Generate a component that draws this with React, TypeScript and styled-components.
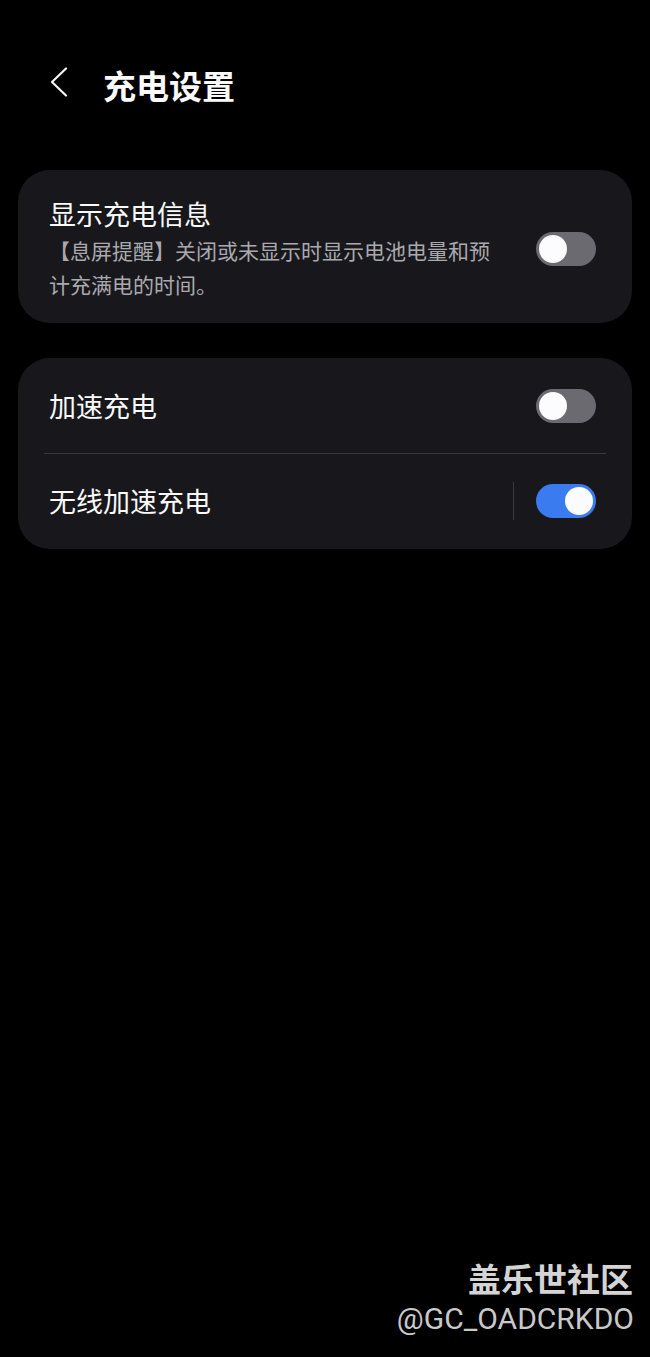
import styled, { createGlobalStyle } from "styled-components";

const GlobalStyle = createGlobalStyle`
  html, body {
    margin: 0;
    padding: 0;
    background: #000;
  }
  * {
    box-sizing: border-box;
  }
`;

const Screen = styled.div`
  position: relative;
  width: 650px;
  height: 1357px;
  background: #000;
  padding: 54px 18px 0;
  font-family: "Noto Sans CJK SC", "Noto Sans", sans-serif;
  color: #fafafa;
  overflow: hidden;
`;

const Header = styled.header`
  display: flex;
  align-items: center;
  height: 60px;
  padding-left: 32px;
  margin-bottom: 56px;
`;

const BackButton = styled.button`
  display: flex;
  align-items: center;
  justify-content: center;
  width: 18px;
  height: 30px;
  padding: 0;
  margin: 0 35px 5px 0;
  border: none;
  background: none;
  cursor: pointer;
`;

const PageTitle = styled.h1`
  margin: 0 0 -2px;
  font-size: 33px;
  font-weight: 700;
  line-height: 40px;
`;

const Card = styled.section<{ $padded?: boolean }>`
  background: #18181c;
  border-radius: 32px;
  padding: ${(p) => (p.$padded ? "26px 36px 22px 31px" : "1px 0")};
  margin-bottom: 35px;
`;

const InfoRow = styled.div`
  display: flex;
  align-items: center;
  justify-content: space-between;
`;

const TextBlock = styled.div`
  width: 451px;
`;

const RowTitle = styled.div`
  font-size: 27px;
  line-height: 36px;
  color: #fafafa;
`;

const RowSub = styled.div`
  margin-top: 1px;
  font-size: 21px;
  line-height: 34px;
  color: #a9a9ae;
`;

const ListRow = styled.div`
  display: flex;
  align-items: center;
  justify-content: space-between;
  height: 94px;
  padding: 0 36px 0 31px;
`;

const Trailing = styled.div`
  display: flex;
  align-items: center;
`;

const VDivider = styled.span`
  width: 1px;
  height: 38px;
  background: #3a3a3f;
  margin-right: 22px;
`;

const Divider = styled.div`
  height: 1px;
  margin: 0 26px;
  background: #38383d;
`;

const Track = styled.div<{ $on: boolean }>`
  position: relative;
  width: 60px;
  height: 34px;
  border-radius: 17px;
  background: ${(p) => (p.$on ? "#3b7bf0" : "#6b6a70")};
  flex-shrink: 0;
`;

const Thumb = styled.span<{ $on: boolean }>`
  position: absolute;
  top: 3px;
  left: ${(p) => (p.$on ? "29px" : "3px")};
  width: 28px;
  height: 28px;
  border-radius: 50%;
  background: #fcfcff;
`;

const Watermark = styled.div`
  position: absolute;
  right: 16px;
  bottom: 17px;
  display: flex;
  flex-direction: column;
  align-items: flex-end;
`;

const MarkBrand = styled.div`
  font-family: "Noto Sans CJK SC", sans-serif;
  font-size: 33px;
  font-weight: 700;
  line-height: 40px;
  margin-right: 1px;
  color: #d4d4d4;
  text-shadow: 0 0 2px rgba(0, 0, 0, 0.6);
`;

const MarkUser = styled.div`
  font-family: Roboto, "Liberation Sans", sans-serif;
  font-size: 30px;
  line-height: 42px;
  color: #c9c9c9;
`;

function Toggle({ on }: { on: boolean }) {
  return (
    <Track $on={on}>
      <Thumb $on={on} />
    </Track>
  );
}

export default function App() {
  return (
    <>
      <GlobalStyle />
      <Screen>
        <Header>
          <BackButton aria-label="返回">
            <svg width="18" height="30" viewBox="0 0 18 30">
              <polyline
                points="16,1.5 2,15 16,28.5"
                fill="none"
                stroke="#f5f5f5"
                strokeWidth="2.2"
                strokeLinecap="round"
                strokeLinejoin="round"
              />
            </svg>
          </BackButton>
          <PageTitle>充电设置</PageTitle>
        </Header>

        <Card $padded>
          <InfoRow>
            <TextBlock>
              <RowTitle>显示充电信息</RowTitle>
              <RowSub>【息屏提醒】关闭或未显示时显示电池电量和预计充满电的时间。</RowSub>
            </TextBlock>
            <Toggle on={false} />
          </InfoRow>
        </Card>

        <Card>
          <ListRow>
            <RowTitle>加速充电</RowTitle>
            <Toggle on={false} />
          </ListRow>
          <Divider />
          <ListRow>
            <RowTitle>无线加速充电</RowTitle>
            <Trailing>
              <VDivider />
              <Toggle on />
            </Trailing>
          </ListRow>
        </Card>

        <Watermark>
          <MarkBrand>盖乐世社区</MarkBrand>
          <MarkUser>@GC_OADCRKDO</MarkUser>
        </Watermark>
      </Screen>
    </>
  );
}
